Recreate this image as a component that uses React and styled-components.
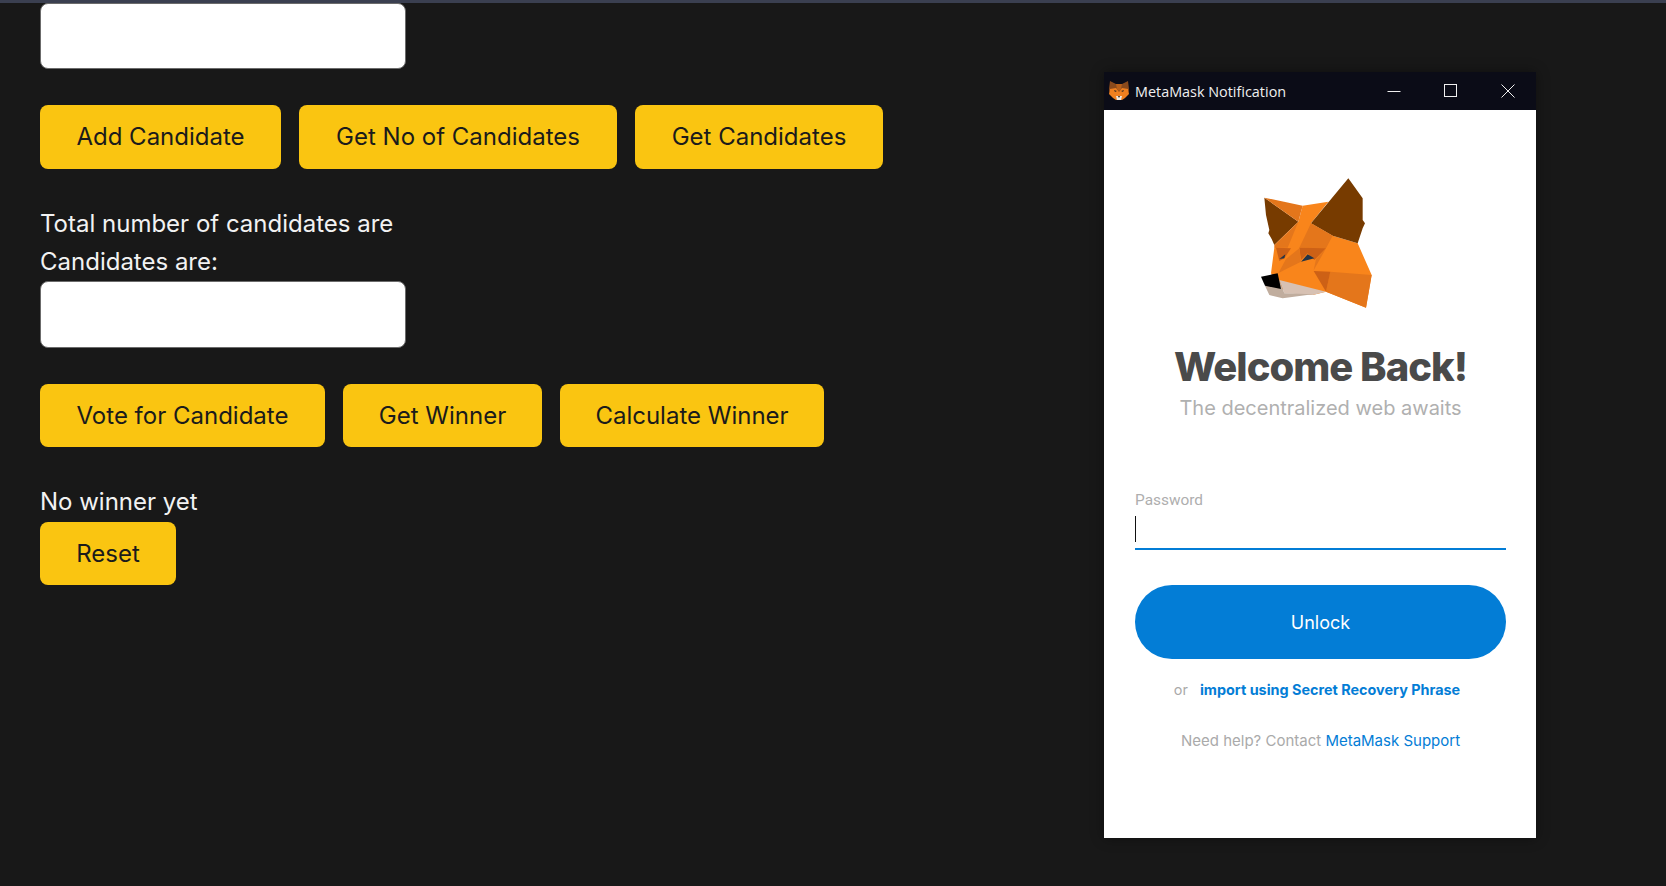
import React from 'react';
import styled, { createGlobalStyle } from 'styled-components';

const GlobalStyle = createGlobalStyle`
  html, body {
    margin: 0;
    padding: 0;
    height: 100%;
    overflow: hidden;
    background: #181818;
  }
`;

const Page = styled.div`
  position: relative;
  height: 886px;
  background: #181818;
  border-top: 3px solid #3a3f50;
  box-sizing: border-box;
  font-family: Inter, "Liberation Sans", sans-serif;
  color: #f2f2f2;
`;

const Column = styled.main`
  display: flex;
  flex-direction: column;
  align-items: flex-start;
  padding-left: 40px;
`;

const CandidateInput = styled.input`
  display: block;
  box-sizing: border-box;
  width: 366px;
  height: ${p => p.$h || 66}px;
  background: #fff;
  border: 1px solid #6b6b6b;
  border-radius: 8px;
  outline: none;
`;

const ButtonRow = styled.div`
  display: flex;
  gap: 18px;
  margin-top: 36px;
  margin-bottom: 36px;
`;

const ActionButton = styled.button`
  box-sizing: border-box;
  width: ${p => p.$w}px;
  height: ${p => p.$h || 64}px;
  padding: 0 0 ${p => (p.$h ? 0 : 2)}px;
  border: none;
  border-radius: 8px;
  background: #fac511;
  color: #1b1b1b;
  font-family: inherit;
  font-size: 24px;
  font-weight: 400;
`;

const ResetButton = styled(ActionButton)`
  margin-top: 1px;
`;

const Line = styled.div`
  font-size: 24px;
  line-height: 38px;
`;

const WindowFrame = styled.section`
  position: absolute;
  left: 1104px;
  top: 69px;
  width: 432px;
  height: 766px;
  display: flex;
  flex-direction: column;
  background: #fff;
  box-shadow: 0 0 12px rgba(0, 0, 0, 0.4);
`;

const TitleBar = styled.header`
  display: flex;
  align-items: center;
  height: 38px;
  flex: none;
  background: #0b0c17;
  color: #f0f0f0;
  font-family: "Open Sans", "Noto Sans", sans-serif;
  font-size: 14.4px;
  padding-left: 5px;
`;

const TitleText = styled.span`
  margin-left: 6px;
  flex: 1;
`;

const WinControl = styled.span`
  width: 57px;
  height: 38px;
  display: flex;
  align-items: center;
  justify-content: center;
`;

const WinBody = styled.div`
  flex: 1;
  display: flex;
  flex-direction: column;
  align-items: stretch;
  padding: 0 30px 0 31px;
  font-family: Inter, "Open Sans", sans-serif;
  text-align: center;
`;

const FoxWrap = styled.div`
  display: flex;
  justify-content: center;
  margin-top: 55px;
  height: 155px;
`;

const Heading = styled.h1`
  margin: 22px 0 0;
  font-size: 40px;
  line-height: 50px;
  font-weight: 800;
  letter-spacing: -1px;
  color: #4a4a4a;
`;

const Subtitle = styled.p`
  margin: 3px 0 0;
  font-size: 20px;
  line-height: 26px;
  color: #b0b0b0;
`;

const Field = styled.div`
  margin-top: 70px;
  display: flex;
  flex-direction: column;
  text-align: left;
`;

const FieldLabel = styled.label`
  font-family: Roboto, sans-serif;
  font-size: 15.4px;
  font-weight: 400;
  line-height: 18px;
  color: #aeaeae;
`;

const FieldInput = styled.div`
  height: 32px;
  margin-top: 5px;
  border-bottom: 2px solid #037dd6;
  display: flex;
  align-items: flex-start;
  padding-top: 2px;
`;

const Caret = styled.i`
  display: block;
  width: 1px;
  height: 26px;
  background: #111;
`;

const UnlockButton = styled.button`
  flex: none;
  height: 74px;
  margin-top: 35px;
  border: none;
  border-radius: 37px;
  background: #037dd6;
  color: #fff;
  font-family: inherit;
  font-size: 18px;
`;

const ImportLine = styled.div`
  margin-top: 20px;
  padding-right: 7px;
  font-size: 14.4px;
  line-height: 22px;
  color: #aaa;
`;

const ImportLink = styled.a`
  margin-left: 12px;
  color: #037dd6;
  font-weight: 700;
`;

const HelpLine = styled.div`
  margin-top: 29px;
  font-size: 15px;
  line-height: 22px;
  color: #aaa;
`;

const HelpLink = styled.a`
  color: #037dd6;
`;

const fox = [
  // base of the face, so no white shows through between the facets
  ['#F9851B', '90,325 100,248 172,170 185,122 262,110 210,175 275,212 350,235 392,330 375,428 255,380 215,390 120,372'],
  ['#773B00', '70,98 172,170 100,240 92,222 82,205 85,195 75,150'],
  ['#E4761B', '70,98 185,122 172,170'],
  ['#E4761B', '100,240 172,170 140,248 100,248'],
  ['#773B00', '322,40 365,100 365,165 372,175 365,190 350,235 275,212 210,175'],
  ['#E4761B', '210,175 275,212 255,250 175,248'],
  ['#CD6116', '105,248 150,250 130,280 115,288'],
  ['#CD6116', '175,248 255,250 220,285 200,265 180,285'],
  ['#E4761B', '135,282 175,250 180,290 130,315 112,325'],
  ['#E4761B', '225,282 255,250 218,316'],
  ['#233447', '180,290 200,268 220,280'],
  ['#233447', '115,282 133,268 130,280'],
  ['#E4761B', '268,320 392,330 375,428 255,380'],
  ['#CD6116', '218,318 268,320 255,380'],
  ['#D7C1B3', '115,345 255,380 215,390 130,385'],
  ['#C0AD9E', '72,362 115,345 130,385 215,388 125,400 85,390'],
  ['#000000', '60,335 110,325 120,372 72,362'],
];

const FoxLogo = ({ size }) => (
  <svg width={size} height={size * 465 / 480} viewBox="0 0 480 465">
    {fox.map(([fill, points], i) => (
      <polygon key={i} fill={fill} points={points} />
    ))}
  </svg>
);

const SmallFox = () => (
  <svg width="20" height="20" viewBox="0 0 20 20">
    <polygon fill="#8A4A1C" points="1,0 7,3 13,3 19,0 20,8 19,12 1,12 0,8" />
    <polygon fill="#B8601A" points="7,3 13,3 12,8 10,10 8,8" />
    <polygon fill="#F0801F" points="1,8 7,7 10,11 13,7 19,8 20,13 16,17 13,19 7,19 4,17 0,13" />
    <polygon fill="#3A2A20" points="5,9 8,10 6,11" />
    <polygon fill="#3A2A20" points="15,9 12,10 14,11" />
    <polygon fill="#EFE6DC" points="7,15 13,15 12,19 8,19" />
    <polygon fill="#2A1C14" points="9,15 11,15 10,17" />
  </svg>
);

export default function App() {
  return (
    <Page>
      <GlobalStyle />
      <Column>
        <CandidateInput />
        <ButtonRow>
          <ActionButton $w={241}>Add Candidate</ActionButton>
          <ActionButton $w={318}>Get No of Candidates</ActionButton>
          <ActionButton $w={248}>Get Candidates</ActionButton>
        </ButtonRow>
        <Line>Total number of candidates are</Line>
        <Line>Candidates are:</Line>
        <CandidateInput $h={67} />
        <ButtonRow>
          <ActionButton $w={285} $h={63}>Vote for Candidate</ActionButton>
          <ActionButton $w={199} $h={63}>Get Winner</ActionButton>
          <ActionButton $w={264} $h={63}>Calculate Winner</ActionButton>
        </ButtonRow>
        <Line>No winner yet</Line>
        <ResetButton $w={136} $h={63}>Reset</ResetButton>
      </Column>

      <WindowFrame>
        <TitleBar>
          <SmallFox />
          <TitleText>MetaMask Notification</TitleText>
          <WinControl>
            <svg width="14" height="14" viewBox="0 0 14 14"><path d="M0.5 7.5h13" stroke="#f0f0f0" fill="none" /></svg>
          </WinControl>
          <WinControl>
            <svg width="14" height="14" viewBox="0 0 14 14"><rect x="0.5" y="0.5" width="12" height="12" stroke="#f0f0f0" fill="none" /></svg>
          </WinControl>
          <WinControl>
            <svg width="14" height="14" viewBox="0 0 14 14"><path d="M0.5 0.5l13 13M13.5 0.5l-13 13" stroke="#f0f0f0" fill="none" /></svg>
          </WinControl>
        </TitleBar>
        <WinBody>
          <FoxWrap><FoxLogo size={160} /></FoxWrap>
          <Heading>Welcome Back!</Heading>
          <Subtitle>The decentralized web awaits</Subtitle>
          <Field>
            <FieldLabel>Password</FieldLabel>
            <FieldInput><Caret /></FieldInput>
          </Field>
          <UnlockButton>Unlock</UnlockButton>
          <ImportLine>or<ImportLink>import using Secret Recovery Phrase</ImportLink></ImportLine>
          <HelpLine>Need help? Contact <HelpLink>MetaMask Support</HelpLink></HelpLine>
        </WinBody>
      </WindowFrame>
    </Page>
  );
}
